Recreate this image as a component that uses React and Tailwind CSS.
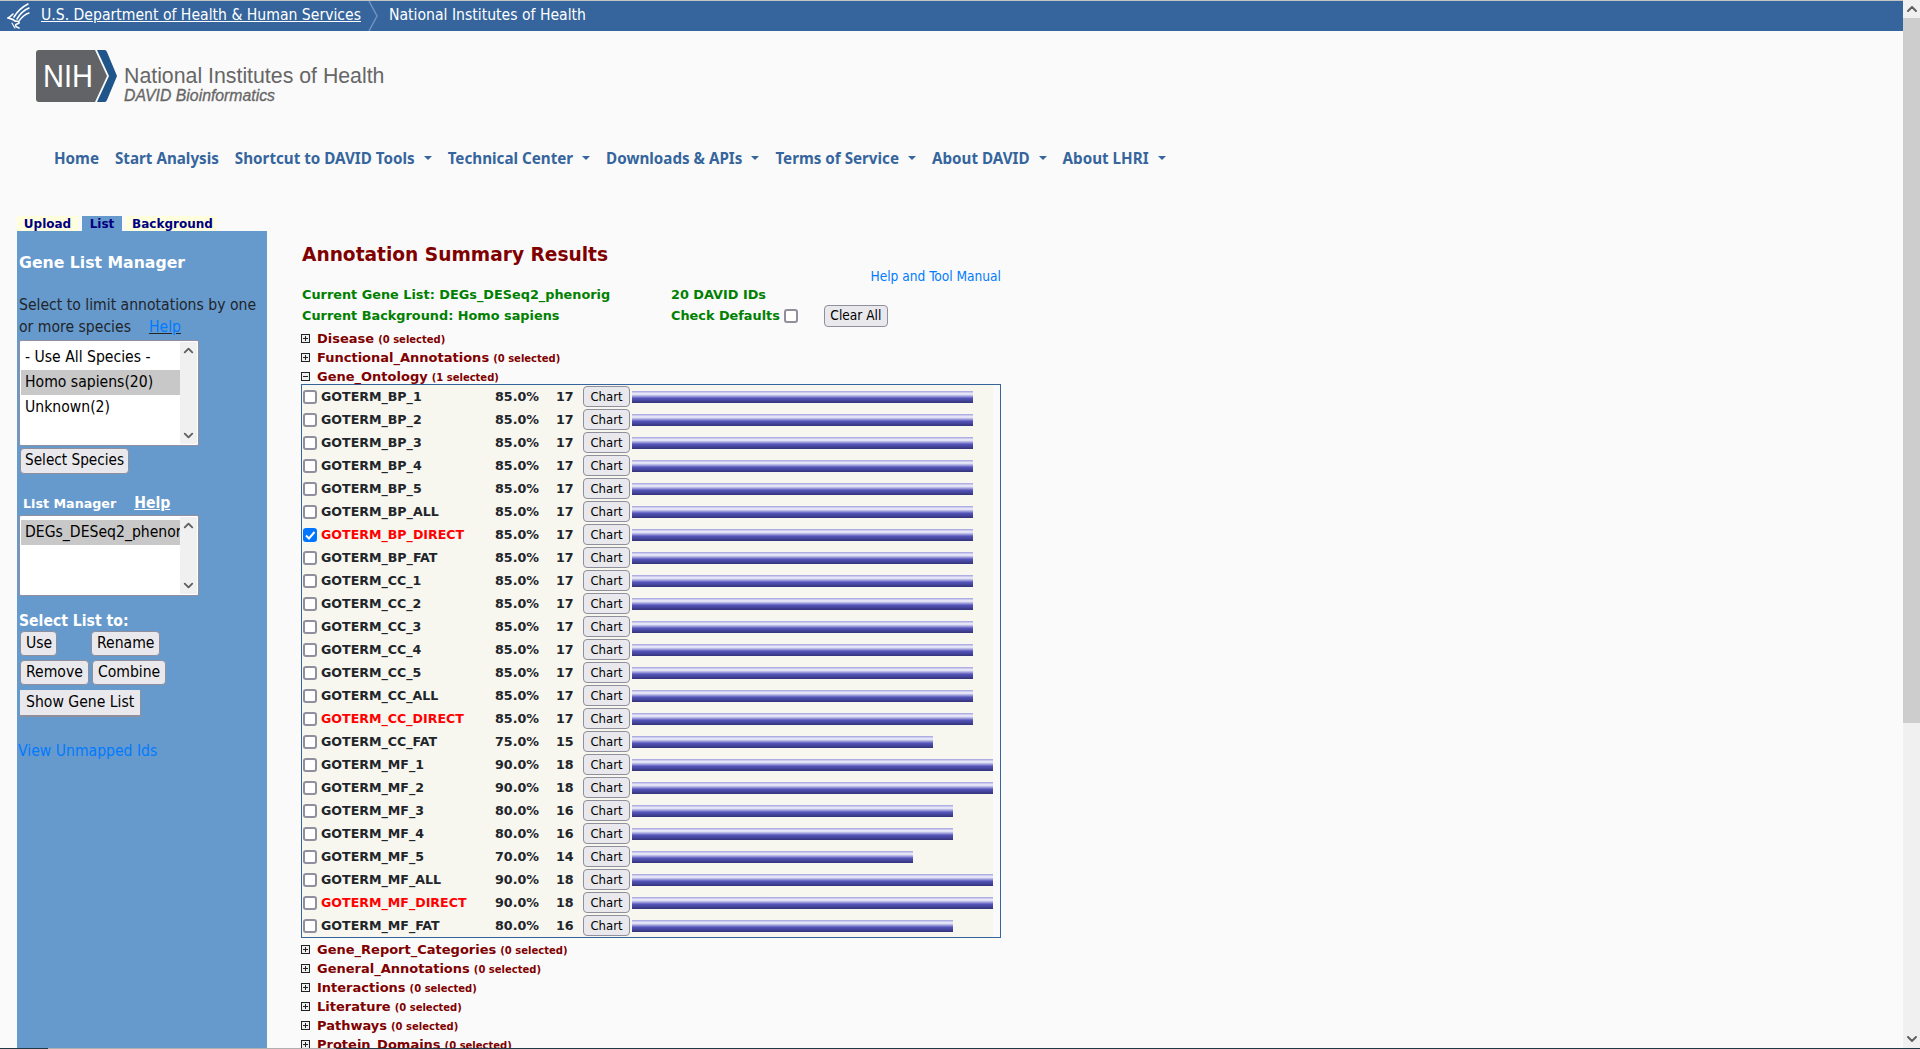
import { ChevronUp, ChevronDown } from 'lucide-react';

const verdana = 'font-["DejaVu_Sans",sans-serif]';
const tahoma = 'font-["DejaVu_Sans_Condensed","DejaVu_Sans",sans-serif]';

const goterms = [
  ['GOTERM_BP_1', 85, 17],
  ['GOTERM_BP_2', 85, 17],
  ['GOTERM_BP_3', 85, 17],
  ['GOTERM_BP_4', 85, 17],
  ['GOTERM_BP_5', 85, 17],
  ['GOTERM_BP_ALL', 85, 17],
  ['GOTERM_BP_DIRECT', 85, 17, 'checked'],
  ['GOTERM_BP_FAT', 85, 17],
  ['GOTERM_CC_1', 85, 17],
  ['GOTERM_CC_2', 85, 17],
  ['GOTERM_CC_3', 85, 17],
  ['GOTERM_CC_4', 85, 17],
  ['GOTERM_CC_5', 85, 17],
  ['GOTERM_CC_ALL', 85, 17],
  ['GOTERM_CC_DIRECT', 85, 17, 'red'],
  ['GOTERM_CC_FAT', 75, 15],
  ['GOTERM_MF_1', 90, 18],
  ['GOTERM_MF_2', 90, 18],
  ['GOTERM_MF_3', 80, 16],
  ['GOTERM_MF_4', 80, 16],
  ['GOTERM_MF_5', 70, 14],
  ['GOTERM_MF_ALL', 90, 18],
  ['GOTERM_MF_DIRECT', 90, 18, 'red'],
  ['GOTERM_MF_FAT', 80, 16],
];

const navItems = [
  ['Home', false],
  ['Start Analysis', false],
  ['Shortcut to DAVID Tools', true],
  ['Technical Center', true],
  ['Downloads & APIs', true],
  ['Terms of Service', true],
  ['About DAVID', true],
  ['About LHRI', true],
];

function Btn({ children, className = '' }) {
  return (
    <button className={`h-[25px] px-[5px] bg-[#e9e9ed] border border-[#8f8f9d] rounded-[4px] text-black leading-none ${className}`}>
      {children}
    </button>
  );
}

function Check({ checked }) {
  if (checked) {
    return (
      <span className="block w-[14px] h-[14px] rounded-[3px] bg-[#0075ff] flex items-center justify-center shrink-0">
        <svg width="12" height="12" viewBox="0 0 12 12" fill="none" stroke="white" strokeWidth="2">
          <path d="M2 6.5 L5 9.5 L10.5 3" />
        </svg>
      </span>
    );
  }
  return <span className="block w-[14px] h-[14px] rounded-[3px] bg-white border-2 border-[#8f8f9d] shrink-0" />;
}

function Toggle({ open }) {
  return (
    <svg width="9" height="9" viewBox="0 0 9 9" className="shrink-0">
      <rect x="0.5" y="0.5" width="8" height="8" fill="#eee" stroke="#222" />
      <path d={open ? 'M2 4.5h5' : 'M2 4.5h5M4.5 2v5'} stroke="#222" />
    </svg>
  );
}

function Section({ name, count = 0, open }) {
  return (
    <div className="flex items-center h-[19px] whitespace-nowrap">
      <Toggle open={open} />
      <span className="ml-[7px] text-[13px] font-bold text-[#800000]">{name}</span>
      <span className="ml-[4px] text-[10px] font-bold text-[#800000] mt-[2px]">({count} selected)</span>
    </div>
  );
}

function ListBox({ height, items }) {
  return (
    <div className="w-[180px] bg-white border border-[#8f8f9d] rounded-[2px] p-[1px] flex" style={{ height }}>
      <div className="flex-1 min-w-0 pt-[3px] overflow-hidden">
        {items.map(([label, selected]) => (
          <div key={label} className={`h-[25px] leading-[25px] pl-[4px] text-[15.6px] text-black whitespace-nowrap ${selected ? 'bg-[#c8c8c8]' : ''}`}>
            {label}
          </div>
        ))}
      </div>
      <ScrollTrack />
    </div>
  );
}

function ScrollTrack() {
  return (
    <div className="w-[17px] shrink-0 bg-[#f0f0f0] flex flex-col justify-between items-center py-[1px]">
      <ChevronUp size={15} strokeWidth={3} className="text-[#606060]" />
      <ChevronDown size={15} strokeWidth={3} className="text-[#606060]" />
    </div>
  );
}

function Logo() {
  return (
    <div className="flex items-start">
      <svg width="81" height="52" viewBox="0 0 81 52" className="shrink-0">
        <path d="M3 0H59L71 26L59 52H3Q0 52 0 49V3Q0 0 3 0Z" fill="#626366" />
        <path d="M61 0H69Q70 0 71 2L81 26L71 50Q70 52 69 52H61L73 26Z" fill="#20558a" />
        <text x="7" y="37" fill="white" fontSize="31" textLength="50" lengthAdjust="spacingAndGlyphs" fontFamily="Liberation Sans, sans-serif">NIH</text>
      </svg>
      <div className='ml-[7px] mt-[16px] font-["Liberation_Sans",sans-serif] text-[#666666]'>
        <div className="text-[21.3px] leading-[21px] whitespace-nowrap">National Institutes of Health</div>
        <div className="text-[15.8px] leading-[17px] italic whitespace-nowrap [-webkit-text-stroke:0.3px_#666666]">DAVID Bioinformatics</div>
      </div>
    </div>
  );
}

function Eagle() {
  return (
    <svg width="23" height="26" viewBox="0 0 23 26" fill="none" stroke="white" strokeLinecap="round" className="shrink-0">
      <path d="M21 1 C15 4 10 9 7 14" strokeWidth="1.6" />
      <path d="M22 5 C17 7 13 11 10 16" strokeWidth="1.5" />
      <path d="M22 10 C18 11 15 14 12 18" strokeWidth="1.4" />
      <path d="M6 11 C4 13 3 14 1 15 C4 16 6 16 8 18" strokeWidth="1.6" />
      <path d="M8 18 C12 18 14 20 10 21 C7 22 9 24 12 25" strokeWidth="1.5" />
      <path d="M5 20 C6 22 7 24 8 25" strokeWidth="1.1" />
    </svg>
  );
}

export default function App() {
  return (
    <div className="h-[1049px] overflow-hidden flex flex-col bg-[#fafafa]">
      <div className="flex-1 min-h-0 flex">
        <div className="flex-1 min-w-0 flex flex-col">
          {/* top strip */}
          <div className="h-[1px] shrink-0 bg-[#c4c4c4]" />
          <div className='h-[30px] shrink-0 bg-[#35659c] flex items-center text-white text-[15.6px] font-["DejaVu_Sans_Condensed",sans-serif]'>
            <div className="ml-[7px]"><Eagle /></div>
            <a className="ml-[7px] pl-[4px] -mt-[1px] underline whitespace-nowrap">U.S. Department of Health &amp; Human Services</a>
            <svg width="12" height="30" viewBox="0 0 12 30" fill="none" stroke="#6f93bd" strokeWidth="1.5" className="ml-[7px] shrink-0">
              <path d="M1 0 L9 15 L1 30" />
            </svg>
            <span className="ml-[9px] -mt-[1px] whitespace-nowrap">National Institutes of Health</span>
          </div>

          <div className="pl-[36px] pt-[19px] h-[113px] shrink-0"><Logo /></div>

          <nav className='pl-[54px] h-[28px] flex items-center gap-[16px] text-[15.2px] font-bold text-[#35659c] font-["Noto_Sans",sans-serif] shrink-0'>
            {navItems.map(([label, caret]) => (
              <span key={label} className="flex items-center whitespace-nowrap">
                {label}
                {caret && <span className="ml-[9px] w-0 h-0 border-x-[4px] border-x-transparent border-t-[4px] border-t-[#35659c]" />}
              </span>
            ))}
          </nav>

          <div className={`flex-1 min-h-0 mt-[44px] pl-[17px] flex ${tahoma}`}>
            <div className="w-[250px] shrink-0 flex flex-col">
              <div className={`flex h-[15px] text-[12px] font-bold text-[#000080] ${verdana}`}>
                <span className="w-[61px] bg-[#ffffdd] text-center leading-[16px]">Upload</span>
                <span className="ml-[4px] w-[40px] bg-[#6699cc] text-center leading-[16px]">List</span>
                <span className="ml-[4px] w-[90px] pl-[3px] bg-[#ffffdd] text-center leading-[16px]">Background</span>
              </div>
              <aside className="flex-1 bg-[#6699cc] text-[#212529] pl-[2px] text-[15.6px]">
                <h2 className={`mt-[22px] text-[15.7px] leading-[20px] font-bold text-white ${verdana}`}>Gene List Manager</h2>
                <p className="mt-[21px] leading-[22px] w-[245px]">
                  Select to limit annotations by one or more species
                  <a className="ml-[18px] text-[#007bff] underline decoration-[#212529]">Help</a>
                </p>
                <div className="mt-[2px]">
                  <ListBox height={106} items={[['- Use All Species -'], ['Homo sapiens(20)', true], ['Unknown(2)']]} />
                </div>
                <Btn className="mt-[2px] !h-[26px] !px-[4px] text-[15.2px] ml-[1px]">Select Species</Btn>
                <div className="mt-[18px] flex items-baseline pl-[4px] text-white font-bold">
                  <span className={`text-[12.7px] ${verdana}`}>List Manager</span>
                  <a className="ml-[18px] underline">Help</a>
                </div>
                <div>
                  <ListBox height={81} items={[['DEGs_DESeq2_phenorig', true]]} />
                </div>
                <div className="mt-[16px] font-bold text-white leading-[19px]">Select List to:</div>
                <div className="flex flex-col pl-[1px]">
                  <div className="flex gap-[1px]">
                    <Btn className="w-[37px]">Use</Btn>
                    <Btn className="ml-[33px]">Rename</Btn>
                  </div>
                  <div className="flex gap-[3px] mt-[4px]">
                    <Btn>Remove</Btn>
                    <Btn>Combine</Btn>
                  </div>
                  <div className="mt-[5px]">
                    <button className="h-[27px] px-[6px] bg-[#e9e9ed] border-b-2 border-r border-[#8f8f9d] text-black">Show Gene List</button>
                  </div>
                </div>
                <a className="block mt-[23px] text-[#007bff] -ml-[1px]">View Unmapped Ids</a>
              </aside>
            </div>

            <main className={`ml-[34px] w-[701px] shrink-0 flex flex-col ${verdana}`}>
              <h1 className="mt-[27px] pl-[1px] text-[18.6px] leading-[24px] font-bold text-[#800000] whitespace-nowrap">Annotation Summary Results</h1>
              <div className="mt-[1px] text-right text-[13.6px] leading-[16px] text-[#007bff] w-[700px]">
                <span className={tahoma}>Help and Tool Manual</span>
              </div>
              <div className="grid grid-cols-[369px_1fr] auto-rows-[21px] text-[12.85px] font-bold text-[#008000] leading-[21px] pl-[1px] whitespace-nowrap">
                <div>Current Gene List: DEGs_DESeq2_phenorig</div>
                <div>20 DAVID IDs</div>
                <div>Current Background: Homo sapiens</div>
                <div className="flex items-center">
                  Check Defaults
                  <span className="ml-[4px]"><Check /></span>
                  <Btn className={`ml-[26px] w-[64px] !h-[22px] !px-0 text-[13.6px] font-normal ${tahoma}`}>Clear All</Btn>
                </div>
              </div>
              <div className="mt-[3px] relative">
                <Section name="Disease" />
                <Section name="Functional_Annotations" />
                <Section name="Gene_Ontology" count={1} open />
              </div>
              <div className="border border-[#35659c] bg-[#fafafa] h-[554px] w-[700px] -mt-[2px] shrink-0">
                <div className="bg-[#f7f6ef] w-[691px] h-full">
                  {goterms.map(([name, pct, n, flag]) => {
                    const red = flag === 'red' || flag === 'checked';
                    return (
                      <div key={name} className="h-[23px] flex items-center text-[12.7px] font-bold text-[#212529] whitespace-nowrap">
                        <span className="ml-[1px]"><Check checked={flag === 'checked'} /></span>
                        <span className={`ml-[4px] w-[174px] text-[12.6px] pt-[1px] ${red ? 'text-[#ff0000]' : ''}`}>{name}</span>
                        <span className="w-[61px]">{pct}.0%</span>
                        <span className="w-[27px]">{n}</span>
                        <Btn className={`!h-[21px] w-[47px] !px-0 shrink-0 text-[13px] font-normal text-[#212529] ${tahoma}`}>Chart</Btn>
                        <span
                          className="ml-[2px] h-[12px] bg-[linear-gradient(#a0a0e0_0%,#f4f4fc_25%,#b0b0e4_40%,#5555bb_60%,#33337a_100%)]"
                          style={{ width: n * 20 + 1 }}
                        />
                      </div>
                    );
                  })}
                </div>
              </div>
              <div className="mt-[2px] shrink-0">
                <Section name="Gene_Report_Categories" />
                <Section name="General_Annotations" />
                <Section name="Interactions" />
                <Section name="Literature" />
                <Section name="Pathways" />
                <Section name="Protein_Domains" />
              </div>
            </main>
          </div>
        </div>

        {/* page scrollbar */}
        <div className="w-[17px] shrink-0 bg-[#f0f0f0] flex flex-col">
          <div className="h-[18px] flex items-center justify-center shrink-0">
            <ChevronUp size={16} strokeWidth={3} className="text-[#606060]" />
          </div>
          <div className="h-[705px] bg-[#cdcdcd] shrink-0" />
          <div className="flex-1" />
          <div className="h-[18px] flex items-center justify-center shrink-0">
            <ChevronDown size={16} strokeWidth={3} className="text-[#606060]" />
          </div>
        </div>
      </div>
      {/* strip left along the bottom edge */}
      <div className="h-[1px] shrink-0 flex bg-[#1f3a44]">
        <div className="w-[48px]" />
        <div className="w-[288px] bg-[#b0b0b0]" />
      </div>
    </div>
  );
}
